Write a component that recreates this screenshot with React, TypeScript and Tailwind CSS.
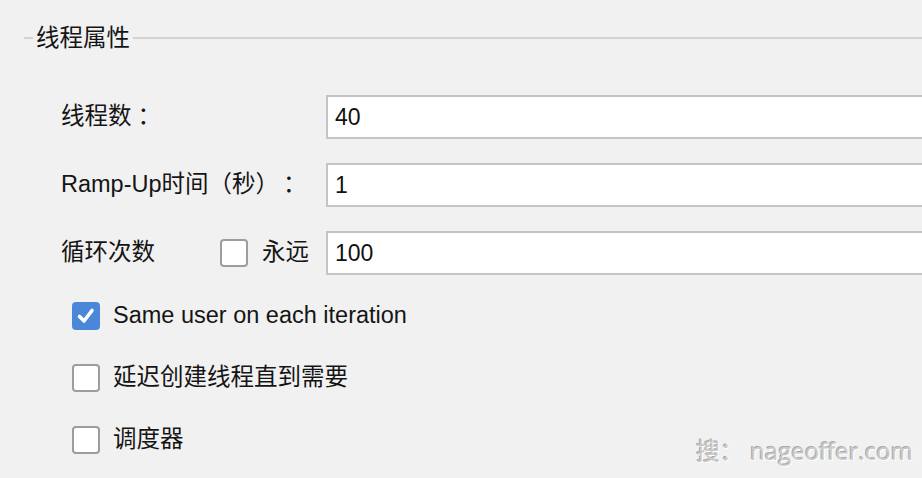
import React from 'react';

const font = { fontFamily: '"Liberation Sans", "Noto Sans CJK SC", sans-serif' };

const Field: React.FC<{ value: string }> = ({ value }) => (
  <div className="h-[44px] w-[640px] shrink-0 border-2 border-[#c4c4c4] bg-white pl-[7px] flex items-center text-[23px] text-[#111]">
    {value}
  </div>
);

const Box: React.FC<{ checked?: boolean }> = ({ checked }) =>
  checked ? (
    <div className="w-[28px] h-[28px] rounded-[4px] bg-[#4a87d9] flex items-center justify-center shrink-0">
      <svg width="20" height="20" viewBox="0 0 20 20">
        <path d="M3.5 10.5 L8 15 L16 4.5" fill="none" stroke="#fff" strokeWidth="3.6" strokeLinecap="round" strokeLinejoin="round" />
      </svg>
    </div>
  ) : (
    <div className="w-[28px] h-[28px] rounded-[4px] border-2 border-[#9d9d9d] bg-white shrink-0" />
  );

const App: React.FC = () => {
  return (
    <div
      className="relative w-[922px] h-[478px] overflow-hidden bg-[#f1f1f1] text-[#151515] [text-spacing-trim:space-all]"
      style={font}
    >
      <div className="flex items-center pt-[24px] h-[52px]">
        <div className="ml-[24px] w-[9px] h-[2px] bg-[#d2d2d2]" />
        <span className="mx-[3px] text-[23.5px] leading-[28px]">线程属性</span>
        <div className="flex-1 h-[2px] bg-[#d2d2d2]" />
      </div>

      <div className="flex flex-col gap-[24px] mt-[43px]">
        <div className="flex items-center">
          <span className="w-[326px] pl-[61px] shrink-0 text-[23.5px] whitespace-nowrap">
            线程数<span className="ml-[6px]">：</span>
          </span>
          <Field value="40" />
        </div>
        <div className="flex items-center">
          <span className="w-[326px] pl-[61px] shrink-0 text-[23.5px] whitespace-nowrap">
            Ramp-Up时间（秒）<span className="ml-[4px]">：</span>
          </span>
          <Field value="1" />
        </div>
        <div className="flex items-center">
          <div className="w-[326px] pl-[61px] shrink-0 flex items-center text-[23.5px] whitespace-nowrap">
            <span className="w-[159px]">循环次数</span>
            <Box />
            <span className="ml-[14px]">永远</span>
          </div>
          <Field value="100" />
        </div>
      </div>

      <div className="flex flex-col gap-[34px] mt-[27px] pl-[72px] text-[23.5px]">
        <div className="flex items-center gap-[13px] h-[28px]">
          <Box checked />
          <span>Same user on each iteration</span>
        </div>
        <div className="flex items-center gap-[13px] h-[28px]">
          <Box />
          <span>延迟创建线程直到需要</span>
        </div>
        <div className="flex items-center gap-[13px] h-[28px]">
          <Box />
          <span>调度器</span>
        </div>
      </div>

      <div
        className="absolute right-[9px] bottom-[9px] text-[24px] text-[#c9c9c9] whitespace-nowrap [text-shadow:1px_1px_0_#ffffff,-1px_-1px_0_#a9a9a9]"
        style={{ fontFamily: '"Open Sans", "Noto Sans CJK SC", sans-serif' }}
      >
        搜： nageoffer.com
      </div>
    </div>
  );
};

export default App;
